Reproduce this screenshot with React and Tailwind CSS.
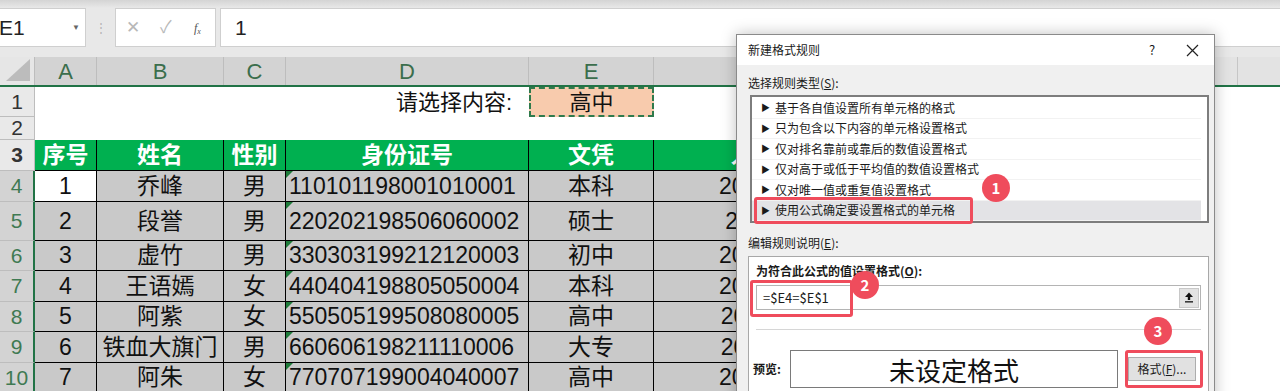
import React from 'react';

const FONT = { fontFamily: '"Liberation Sans","Noto Sans CJK SC",sans-serif' };
const UI_FONT = { fontFamily: '"Noto Sans CJK SC","Liberation Sans",sans-serif' };

const ROWS = [
  { n: 4, h: 'h-[31px]', no: '1', name: '乔峰', sex: '男', id: '110101198001010001', edu: '本科', date: '2010/10/10' },
  { n: 5, h: 'h-[39px]', no: '2', name: '段誉', sex: '男', id: '220202198506060002', edu: '硕士', date: '2015/6/18' },
  { n: 6, h: 'h-[30px]', no: '3', name: '虚竹', sex: '男', id: '330303199212120003', edu: '初中', date: '2012/10/10' },
  { n: 7, h: 'h-[31px]', no: '4', name: '王语嫣', sex: '女', id: '440404198805050004', edu: '本科', date: '2009/10/12' },
  { n: 8, h: 'h-[30px]', no: '5', name: '阿紫', sex: '女', id: '550505199508080005', edu: '高中', date: '2021/11/11' },
  { n: 9, h: 'h-[31px]', no: '6', name: '铁血大旗门', sex: '男', id: '660606198211110006', edu: '大专', date: '2016/11/11' },
  { n: 10, h: 'h-[30px]', no: '7', name: '阿朱', sex: '女', id: '770707199004040007', edu: '高中', date: '2008/10/10' },
];

const RULES = [
  '基于各自值设置所有单元格的格式',
  '只为包含以下内容的单元格设置格式',
  '仅对排名靠前或靠后的数值设置格式',
  '仅对高于或低于平均值的数值设置格式',
  '仅对唯一值或重复值设置格式',
  '使用公式确定要设置格式的单元格',
];

const Badge = ({ n, className }) => (
  <div className={`absolute w-[28px] h-[28px] rounded-full bg-[#ef4c5c] text-white text-[15px] font-bold flex items-center justify-center ${className}`}>
    {n}
  </div>
);

const Dialog = () => (
  <div className="absolute left-[736px] top-[34px] w-[479px] h-[380px] bg-[#f0f0f0] border border-[#8a8a8a] shadow-[0_0_14px_rgba(0,0,0,0.25)] text-[12px] text-[#1a1a1a]" style={UI_FONT}>
    <div className="h-[30px] bg-white flex items-center pl-[11px] pr-[14px]">
      <span className="flex-1">新建格式规则</span>
      <span className="w-[20px] text-center text-[13px] mr-[24px]">?</span>
      <svg width="13" height="13" viewBox="0 0 13 13" className="mr-[1px]">
        <path d="M1 1 L12 12 M12 1 L1 12" stroke="#222" strokeWidth="1.2" />
      </svg>
    </div>
    <div className="pl-[11px] mt-[8px] h-[20px] leading-[20px]">选择规则类型(<u>S</u>):</div>
    <div className="ml-[13px] mt-[2px] w-[459px] h-[128px] bg-white border-2 border-[#7d7d7d] py-[1px] pr-[6px]">
      {RULES.map((r, i) => (
        <div key={r} className={`h-[20.5px] flex items-center pl-[9px] border-b border-[#f2f2f2] ${i === 5 ? 'bg-[#e3e3e6]' : ''}`}>
          <span className="text-[9px] mr-[5px]">▶</span>
          <span>{r}</span>
        </div>
      ))}
    </div>
    <div className="pl-[11px] mt-[10px] h-[20px] leading-[20px]">编辑规则说明(<u>E</u>):</div>
    <div className="ml-[11px] mt-[3px] w-[461px] h-[140px] bg-white border border-[#a8a8a8] px-[7px]">
      <div className="h-[28px] flex items-center font-bold">为符合此公式的值设置格式(<u>O</u>):</div>
      <div className="h-[25px] border border-[#b4b4b4] flex items-center pl-[6px] pr-[1px] text-[13px]">
        <span className="flex-1">=$E4=$E$1</span>
        <div className="w-[20px] h-[20px] bg-[#e3e3e3] border border-[#c8c8c8] flex items-center justify-center">
          <svg width="10" height="11" viewBox="0 0 10 11">
            <path d="M5 0.5 L9 5 L6.2 5 L6.2 8 L3.8 8 L3.8 5 L1 5 Z" fill="#111" />
            <rect x="1" y="9.2" width="8" height="1.3" fill="#111" />
          </svg>
        </div>
      </div>
      <div className="mt-[19px] border-t border-[#d6d6d6]" />
      <div className="mt-[20px] flex items-center">
        <span className="font-bold w-[37px] -ml-[3px]">预览:</span>
        <div className="w-[328px] h-[38px] border border-[#7a7a7a] flex items-center justify-center text-[26px] text-[#111]">未设定格式</div>
        <div className="ml-[10px] w-[68px] h-[24px] bg-[#e1e1e1] border border-[#adadad] flex items-center justify-center text-[12px]">格式(<u>F</u>)...</div>
      </div>
    </div>

    <div className="absolute left-[17px] top-[162px] w-[219px] h-[27px] border-[3px] border-[#ef4c5c] rounded-[3px]" />
    <Badge n="1" className="left-[245px] top-[139px]" />
    <div className="absolute left-[13px] top-[245px] w-[103px] h-[37px] border-[3px] border-[#ef4c5c] rounded-[3px]" />
    <Badge n="2" className="left-[114px] top-[236px]" />
    <div className="absolute left-[388px] top-[315px] w-[78px] h-[38px] border-[3px] border-[#ef4c5c] rounded-[3px]" />
    <Badge n="3" className="left-[407px] top-[282px]" />
  </div>
);

const RowHead = ({ n, h, sel }) => (
  <div className={`w-[35px] shrink-0 ${h} flex items-center justify-center text-[21px] border-b border-r border-[#bdbdbd] ${sel ? 'bg-[#d3d3d3] text-[#3f7a52] border-r-[#217346] border-r-2' : 'bg-[#e9e9e9] text-[#333]'}`}>
    {n}
  </div>
);

export default function App() {
  return (
    <div className="relative w-[1280px] h-[391px] overflow-hidden bg-[#e8e8e8]" style={FONT}>
      {/* formula bar */}
      <div className="h-[8px] bg-gradient-to-b from-[#d4d4d4] to-[#e8e8e8]" />
      <div className="h-[39px] flex">
        <div className="w-[86px] bg-white border border-[#cfcfcf] border-l-0 flex items-center">
          <span className="text-[21px] text-[#222] -ml-[1px] flex-1">E1</span>
          <span className="text-[8px] text-[#666] mr-[5px]">▼</span>
        </div>
        <div className="w-[29px] flex items-center justify-center text-[#b5b5b5] text-[12px]">⋮</div>
        <div className="w-[101px] bg-white border border-[#cfcfcf] flex items-center pl-[10px] text-[#b8b8b8]">
          <span className="text-[17px] w-[34px]">✕</span>
          <span className="text-[17px] w-[34px]">✓</span>
          <span className="text-[12px] italic text-[#555]" style={{ fontFamily: '"Liberation Serif",serif' }}>f<sub className="text-[8px]">x</sub></span>
        </div>
        <div className="w-[4px]" />
        <div className="flex-1 bg-white border border-[#cfcfcf] border-r-0 flex items-center pl-[14px] text-[21px] text-[#222]">1</div>
      </div>
      <div className="h-[10px]" />

      {/* column headers */}
      <div className="h-[30px] flex border-b-2 border-[#217346] text-[22px]">
        <div className="w-[35px] shrink-0 bg-[#e6e6e6] border-r border-[#bdbdbd] flex items-end justify-end p-[4px]">
          <svg width="24" height="22" viewBox="0 0 24 22"><path d="M24 0 L24 22 L0 22 Z" fill="#bcbcbc" /></svg>
        </div>
        {[
          ['A', 'w-[62px]'],
          ['B', 'w-[127px]'],
          ['C', 'w-[62px]'],
          ['D', 'w-[243px]'],
          ['E', 'w-[125px]'],
          ['F', 'w-[246px]'],
        ].map(([l, w]) => (
          <div key={l} className={`${w} shrink-0 bg-[#d3d3d3] border-r border-[#bdbdbd] flex items-center justify-center text-[#3b6e4c]`}>{l}</div>
        ))}
        <div className="w-[338px] shrink-0 bg-[#e3e3e3] border-r border-[#c6c6c6]" />
        <div className="flex-1 bg-[#e3e3e3]" />
      </div>

      {/* row 1 */}
      <div className="flex h-[30px] text-[22px] text-[#111]">
        <RowHead n="1" h="h-[30px]" />
        <div className="w-[494px] shrink-0 bg-white flex items-center justify-end pr-[17px]">请选择内容:</div>
        <div className="w-[125px] shrink-0 bg-[#f8cbad] border-2 border-dashed border-[#2f7a4c] flex items-center justify-center">高中</div>
        <div className="flex-1 bg-white" />
      </div>
      {/* row 2 */}
      <div className="flex h-[23px]">
        <RowHead n="2" h="h-[23px]" />
        <div className="flex-1 bg-white" />
      </div>
      {/* row 3 header */}
      <div className="flex h-[31px] text-[23px] font-bold text-white">
        <RowHead n="3" h="h-[31px]" />
        <div className="w-[62px] shrink-0 bg-[#00b050] border-r border-b border-black flex items-center justify-center">序号</div>
        <div className="w-[127px] shrink-0 bg-[#00b050] border-r border-b border-black flex items-center justify-center">姓名</div>
        <div className="w-[62px] shrink-0 bg-[#00b050] border-r border-b border-black flex items-center justify-center">性别</div>
        <div className="w-[243px] shrink-0 bg-[#00b050] border-r border-b border-black flex items-center justify-center">身份证号</div>
        <div className="w-[125px] shrink-0 bg-[#00b050] border-r border-b border-black flex items-center justify-center">文凭</div>
        <div className="w-[246px] shrink-0 bg-[#00b050] border-r border-b border-black flex items-center justify-center">入职日期</div>
        <div className="flex-1 bg-white" />
      </div>
      {/* data rows */}
      {ROWS.map((r, i) => (
        <div key={r.n} className={`flex ${r.h} text-[23px] text-[#111]`}>
          <RowHead n={r.n} h={r.h} sel />
          <div className={`w-[62px] shrink-0 ${i === 0 ? 'bg-white' : 'bg-[#c9c9c9]'} border-r border-b border-black flex items-center justify-center`}>{r.no}</div>
          <div className="w-[127px] shrink-0 bg-[#c9c9c9] border-r border-b border-black flex items-center justify-center">{r.name}</div>
          <div className="w-[62px] shrink-0 bg-[#c9c9c9] border-r border-b border-black flex items-center justify-center">{r.sex}</div>
          <div className="relative w-[243px] shrink-0 bg-[#c9c9c9] border-r border-b border-black flex items-center pl-[3px]">
            <svg width="7" height="7" viewBox="0 0 7 7" className="absolute left-0 top-0"><path d="M0 0 L7 0 L0 7 Z" fill="#1e7b3a" /></svg>
            {r.id}
          </div>
          <div className="w-[125px] shrink-0 bg-[#c9c9c9] border-r border-b border-black flex items-center justify-center">{r.edu}</div>
          <div className="w-[246px] shrink-0 bg-[#c9c9c9] border-r border-b border-black flex items-center justify-center">{r.date}</div>
          <div className="flex-1 bg-white" />
        </div>
      ))}

      <Dialog />
    </div>
  );
}
